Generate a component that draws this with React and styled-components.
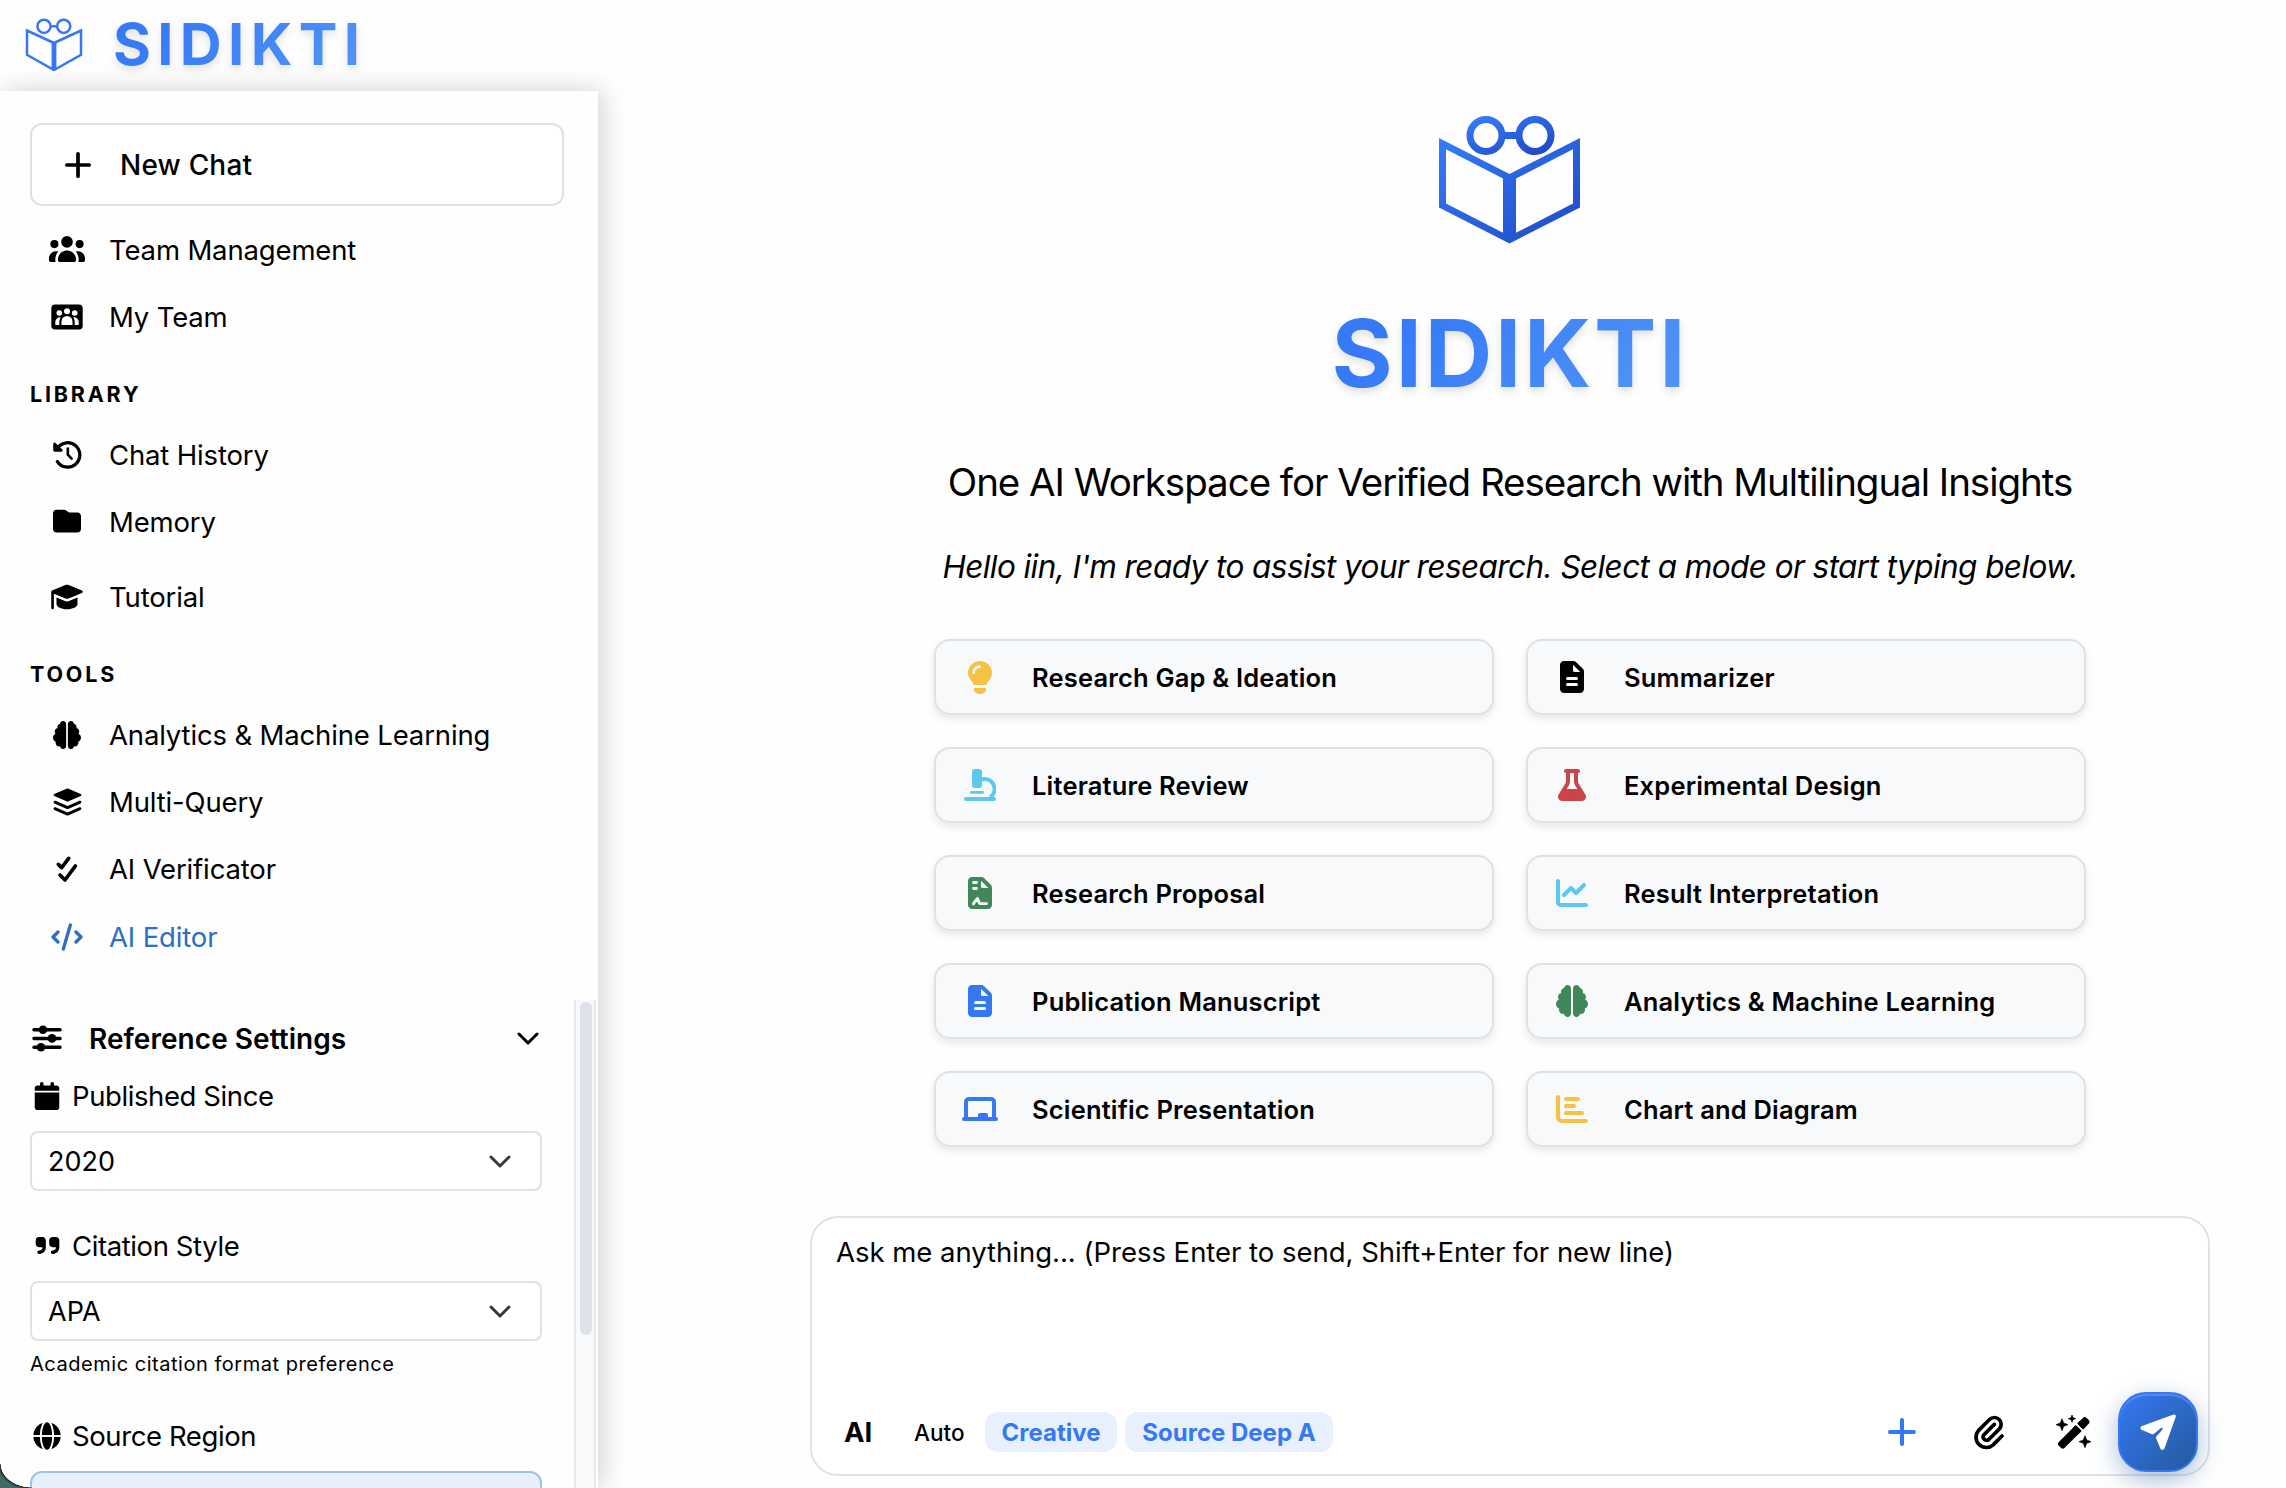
import React, { useState } from 'react';
import styled, { createGlobalStyle } from 'styled-components';
import { FaBrain, FaCalendar, FaQuoteRight, FaFlask, FaChartLine } from 'react-icons/fa6';

const GlobalStyle = createGlobalStyle`
  * { box-sizing: border-box; }
  body {
    margin: 0;
    background: #fefefe;
    color: #000;
    font-family: Inter, "Liberation Sans", sans-serif;
    overflow: hidden;
  }
  button { font: inherit; color: inherit; cursor: pointer; text-align: left; }
  svg { display: block; flex: none; }
`;

const Page = styled.div`
  position: relative;
  width: 2286px;
  height: 1488px;
  display: flex;
  flex-direction: column;
  overflow: hidden;
  background: #fefefe;
`;

const Header = styled.header`
  height: 91px;
  flex: none;
  display: flex;
  align-items: center;
  padding: 0 0 3px 25px;
`;

const Brand = styled.span`
  font-size: ${p => (p.$large ? '93.5px' : '58px')};
  line-height: 1;
  font-weight: 700;
  letter-spacing: ${p => (p.$large ? '2.8px' : '6.3px')};
  background: linear-gradient(135deg, #367af7 20%, #5296f8 100%);
  -webkit-background-clip: text;
  background-clip: text;
  color: transparent;
  filter: drop-shadow(0 4px 4px rgba(0, 0, 0, 0.12));
`;

const HeaderBrand = styled(Brand)`
  margin-left: 30px;
`;

const Body = styled.div`
  flex: 1;
  min-height: 0;
  display: flex;
`;

const Sidebar = styled.aside`
  width: 598px;
  flex: none;
  display: flex;
  flex-direction: column;
  padding-top: 32px;
  background: #fefefe;
  box-shadow: 4px 0 24px rgba(0, 0, 0, 0.18);
`;

const NewChat = styled.button`
  height: 83px;
  margin: 0 34px 10px 30px;
  padding: 0 0 0 33px;
  display: flex;
  align-items: center;
  gap: 29px;
  flex: none;
  background: #fff;
  border: 2px solid #dee2e6;
  border-radius: 12px;
  font-size: 28px;
  font-weight: 500;
  letter-spacing: 0.2px;
`;

const NavHeading = styled.h3`
  height: 71px;
  flex: none;
  margin: 0;
  padding: 17px 0 0 30px;
  line-height: 54px;
  font-size: 21.5px;
  font-weight: 700;
  letter-spacing: 2.8px;
`;

const NavItem = styled.a`
  height: 67px;
  flex: none;
  display: flex;
  align-items: center;
  margin-top: ${p => p.$space || 0}px;
  padding-left: 47px;
  font-size: 27.5px;
  letter-spacing: -0.15px;
  color: ${p => (p.$active ? '#2b70c1' : '#000')};
`;

const NavIcon = styled.span`
  width: 40px;
  margin-right: 22px;
  display: flex;
  justify-content: center;
`;

const Settings = styled.section`
  flex: 1;
  min-height: 0;
  margin-top: 30px;
  display: flex;
  overflow: hidden;
`;

const SettingsBody = styled.div`
  width: 512px;
  margin-left: 30px;
`;

const SettingsTitle = styled.div`
  height: 77px;
  display: flex;
  align-items: center;
  padding: 0 3px 0 2px;
  font-size: 28px;
  font-weight: 600;
  letter-spacing: 0.05px;
  span { flex: 1; margin-left: 27px; }
`;

const FieldLabel = styled.label`
  padding-top: ${p => p.$top || 0}px;
  height: ${p => 37 + (p.$top || 0)}px;
  display: flex;
  align-items: center;
  font-size: 27.5px;
  letter-spacing: -0.4px;
`;

const LabelIcon = styled.span`
  width: 34px;
  margin-right: 8px;
  display: flex;
  justify-content: center;
`;

const SelectBox = styled.button`
  width: 100%;
  height: 60px;
  margin: 17px 0 0;
  padding: 0 29px 0 16px;
  display: flex;
  align-items: center;
  justify-content: space-between;
  background: ${p => (p.$region ? '#e7effa' : '#fff')};
  border: 2px solid ${p => (p.$region ? '#9dc3e6' : '#dee2e6')};
  border-radius: ${p => (p.$region ? '12px' : '8px')};
  font-size: 27px;
`;

const Hint = styled.p`
  margin: 0;
  height: 47px;
  line-height: 47px;
  font-size: 20px;
  letter-spacing: 0.53px;
`;

const ScrollTrack = styled.div`
  width: 22px;
  margin-left: 32px;
  padding: 2px 4px;
  background: #f8f9fb;
  border: solid #e6e8ea;
  border-width: 0 2px;
`;

const ScrollThumb = styled.div`
  width: 12px;
  height: 333px;
  border-radius: 6px;
  background: #dee1e7;
`;

const Main = styled.main`
  flex: 1;
  display: flex;
  flex-direction: column;
  align-items: center;
  padding-left: 136px;
`;

const HeroLogo = styled.div`
  margin-top: 23px;
  height: 136px;
`;

const HeroBrand = styled(Brand)`
  margin-top: 56.5px;
`;

const Tagline = styled.h2`
  margin: 57px 0 0;
  font-size: 38.5px;
  line-height: 50px;
  font-weight: 400;
  letter-spacing: -1.03px;
  white-space: nowrap;
`;

const Greeting = styled.p`
  margin: 38px 0 0;
  font-size: 31.5px;
  line-height: 44px;
  font-style: italic;
  letter-spacing: -0.57px;
  white-space: nowrap;
`;

const Modes = styled.div`
  width: 1152px;
  margin-top: 50px;
  display: grid;
  grid-template-columns: 1fr 1fr;
  gap: 32px;
`;

const ModeCard = styled.button`
  height: 76px;
  display: flex;
  align-items: center;
  padding: 0;
  background: #f8f9fb;
  border: 2px solid #dee2e6;
  border-radius: 16px;
  box-shadow: 0 4px 8px rgba(0, 0, 0, 0.09);
  font-size: 25.5px;
  font-weight: 600;
  letter-spacing: 0.18px;
`;

const ModeIcon = styled.span`
  width: 88px;
  margin-right: 8px;
  display: flex;
  justify-content: center;
  color: ${p => p.$color};
`;

const Composer = styled.div`
  width: 1400px;
  height: 260px;
  margin-top: 69px;
  display: flex;
  flex-direction: column;
  justify-content: space-between;
  background: #fff;
  border: 2px solid #dee2e6;
  border-radius: 28px;
`;

const Prompt = styled.div`
  padding: 18px 0 0 24px;
  font-size: 27.5px;
  line-height: 32px;
  letter-spacing: -0.02px;
`;

const Toolbar = styled.div`
  height: 80px;
  margin-bottom: 2px;
  padding: 0 10px 0 32px;
  display: flex;
  align-items: center;
`;

const ModelName = styled.span`
  width: 70px;
  font-size: 27.5px;
  font-weight: 700;
`;

const AutoLabel = styled.span`
  width: 71px;
  font-size: 22.5px;
  font-weight: 500;
`;

const Chip = styled.button`
  width: ${p => p.$width}px;
  height: 40px;
  margin-right: 8px;
  padding: 0;
  border: 0;
  border-radius: 13px;
  background: #e8effd;
  color: #3478f6;
  text-align: center;
  font-size: 24px;
  font-weight: 700;
  white-space: nowrap;
`;

const ToolIcons = styled.div`
  margin-left: auto;
  margin-right: 27px;
  display: flex;
  align-items: center;
  gap: 52px;
  svg:first-child { margin-right: 6px; }
`;

const SendButton = styled.button`
  width: 80px;
  height: 80px;
  padding: 0;
  display: flex;
  align-items: center;
  justify-content: center;
  border: 2px solid #3478f6;
  border-radius: 28px;
  color: #fff;
  background: linear-gradient(135deg, #3478f6, #255a9b);
  box-shadow: 0 8px 24px rgba(37, 90, 155, 0.4), inset 0 2px 0 rgba(255, 255, 255, 0.18);
`;

const Corner = styled.div`
  position: absolute;
  left: 0;
  bottom: 0;
  width: 32px;
  height: 24px;
  background: radial-gradient(ellipse 32px 24px at 100% 0, transparent 97%, #172b29 99%, #446a66 108%);
`;

/* icons */

const SmallLogo = () => (
  <svg width="58" height="54" viewBox="0 0 58 54" fill="none" stroke="#3478f6" strokeWidth="2.5">
    <path d="M2 13.5v24.3l27 15.2 27-15.2V13.5L29 26z" />
    <path d="M29 26v26" strokeWidth="4.8" />
    <circle cx="19" cy="9.3" r="6.6" />
    <circle cx="38.7" cy="9.3" r="6.6" />
    <path d="M25.6 9.3h6.5" />
  </svg>
);

const BigLogo = () => (
  <svg width="142" height="130" viewBox="0 0 142 130" fill="none" strokeWidth="7">
    <defs>
      <linearGradient id="brandBlue" x1="0" y1="0" x2="1" y2="1">
        <stop offset="0" stopColor="#367cf8" />
        <stop offset="1" stopColor="#1d48c6" />
      </linearGradient>
    </defs>
    <path
      stroke="url(#brandBlue)"
      d="M31 21.5a16 16 0 1 0 32 0a16 16 0 1 0 -32 0M63 21.5h17M80 21.5a16 16 0 1 0 32 0a16 16 0 1 0 -32 0"
    />
    <path
      fill="url(#brandBlue)"
      fillRule="evenodd"
      d="M0 24L70.500 60l70.500-36v69.500L70.500 129.500 0 93.500zM7 35.300V89.500L64 118.800V64.500zM134 35.300V89.500L77 118.800V64.500z"
    />
  </svg>
);

const Plus = ({ size, color }) => (
  <svg width={size} height={size} viewBox="0 0 28 28" stroke={color || 'currentColor'} strokeWidth="4" strokeLinecap="round">
    <path d="M14 2v24M2 14h24" />
  </svg>
);

const Users = () => (
  <svg width="36" height="29" viewBox="0 0 640 512" fill="currentColor">
    <path d="M320 16a104 104 0 1 1 0 208 104 104 0 1 1 0-208zM96 88a72 72 0 1 1 0 144 72 72 0 1 1 0-144zM0 416c0-70.7 57.3-128 128-128 12.800 0 25.200 1.900 36.900 5.400-32.900 36.800-52.900 85.400-52.900 138.600l0 16c0 11.400 2.400 22.200 6.700 32L32 480c-17.700 0-32-14.300-32-32l0-32zm521.300 64c4.300-9.800 6.700-20.600 6.700-32l0-16c0-53.200-20-101.800-52.900-138.600 11.700-3.500 24.100-5.400 36.900-5.400 70.700 0 128 57.300 128 128l0 32c0 17.700-14.300 32-32 32l-86.700 0zM472 160a72 72 0 1 1 144 0 72 72 0 1 1-144 0zM160 432c0-88.400 71.600-160 160-160s160 71.600 160 160l0 16c0 17.700-14.300 32-32 32l-256 0c-17.700 0-32-14.300-32-32l0-16z" />
  </svg>
);

const TeamBadge = () => (
  <svg width="32" height="26" viewBox="0 0 32 26">
    <rect x="0.300" y="0.500" width="31.400" height="25" rx="3.800" fill="currentColor" />
    <g fill="#fff">
      <circle cx="16" cy="7.300" r="3" />
      <circle cx="8.300" cy="9" r="2.800" />
      <circle cx="23.700" cy="9" r="2.800" />
      <path d="M10.500 21v-3.500a5.500 5.500 0 0 1 11 0V21z" />
      <path d="M4.300 21v-3a4.600 4.600 0 0 1 5.400-4.600A8 8 0 0 0 8.300 18v3zM27.700 21v-3a4.600 4.600 0 0 0-5.400-4.600A8 8 0 0 1 23.700 18v3z" />
    </g>
  </svg>
);

const History = () => (
  <svg width="29" height="29" viewBox="0 0 512 512" fill="none" stroke="currentColor" strokeWidth="58" strokeLinecap="round" strokeLinejoin="round">
    <path d="M82 140a215 215 0 1 1-4 240" />
    <path d="M28 70v112h118z" fill="currentColor" strokeWidth="48" />
    <path d="M262 150v108l66 70" strokeWidth="46" />
  </svg>
);

const Folder = () => (
  <svg width="28" height="28" viewBox="0 0 512 512" fill="currentColor">
    <path d="M64 448l384 0c35.300 0 64-28.700 64-64l0-240c0-35.300-28.700-64-64-64L298.700 80c-6.900 0-13.700-2.200-19.200-6.400L241.100 44.800C230 36.500 216.500 32 202.700 32L64 32C28.700 32 0 60.700 0 96L0 384c0 35.300 28.700 64 64 64z" />
  </svg>
);

const GradCap = () => (
  <svg width="32" height="28" viewBox="0 0 576 512" fill="currentColor">
    <path d="M48 195.800l209.200 86.100c9.800 4 20.200 6.100 30.800 6.100s21-2.100 30.800-6.100l242.400-99.800c9-3.700 14.800-12.400 14.800-22.100s-5.800-18.400-14.800-22.100L318.800 38.100C309 34.100 298.600 32 288 32s-21 2.100-30.800 6.100L14.800 137.900C5.800 141.600 0 150.300 0 160L0 456c0 13.300 10.700 24 24 24s24-10.700 24-24l0-260.200zm48 71.700L96 384c0 53 86 96 192 96s192-43 192-96l0-116.600-142.900 58.900c-15.600 6.400-32.200 9.700-49.100 9.700s-33.500-3.300-49.100-9.700L96 267.400z" />
  </svg>
);

const Layers = () => (
  <svg width="29" height="28" viewBox="0 0 86 84" fill="none" stroke="currentColor" strokeWidth="8.500" strokeLinecap="round" strokeLinejoin="round">
    <path d="M4.500 21L43 4.500 81.500 21 43 38z" fill="currentColor" strokeWidth="6" />
    <path d="M5.500 42.500L43 59l37.500-16.500M5.500 62L43 78.500 80.500 62" />
  </svg>
);

const DoubleCheck = () => (
  <svg width="30" height="28" viewBox="0 0 90 84" fill="none" stroke="currentColor" strokeWidth="11" strokeLinecap="round" strokeLinejoin="round">
    <path d="M19 28l10 10 21-28M24 60l15 15 31-42" />
  </svg>
);

const Code = () => (
  <svg width="32" height="28" viewBox="0 0 96 84" fill="none" stroke="currentColor" strokeWidth="10" strokeLinecap="round" strokeLinejoin="round">
    <path d="M21 27L6 42l15 15M75 27l15 15-15 15M58 6L37 78" />
  </svg>
);

const Sliders = () => (
  <svg width="30" height="27" viewBox="0 0 30 27" fill="currentColor" stroke="currentColor" strokeWidth="3.500" strokeLinecap="round">
    <path d="M2 4.700h26M2 13.400h26M2 22.200h26" />
    <g stroke="none">
      <circle cx="11" cy="4.700" r="4.300" />
      <circle cx="20" cy="13.400" r="4.300" />
      <circle cx="9" cy="22.200" r="4.300" />
    </g>
  </svg>
);

const Chevron = ({ color }) => (
  <svg width="22" height="13" viewBox="0 0 22 13" fill="none" stroke={color} strokeWidth="3" strokeLinecap="round" strokeLinejoin="round">
    <path d="M2 2l9 9 9-9" />
  </svg>
);

const Globe = () => (
  <svg width="28" height="28" viewBox="0 0 28 28">
    <circle cx="14" cy="14" r="13.700" fill="currentColor" />
    <g fill="none" stroke="#fff" strokeWidth="1.900">
      <ellipse cx="14" cy="14" rx="6.200" ry="15" />
      <path d="M0 14h28" />
    </g>
  </svg>
);

const Bulb = () => (
  <svg width="24" height="33" viewBox="0 0 72 99" fill="currentColor">
    <path d="M36 0a36 36 0 0 1 36 36c0 12-6 18-11 25-3 4-4 7-6 11H17c-2-4-3-7-6-11C6 54 0 48 0 36A36 36 0 0 1 36 0zM18 81h36v3a15 15 0 0 1-15 15h-6a15 15 0 0 1-15-15z" />
    <path d="M17 35a18 18 0 0 1 18-18" fill="none" stroke="#f8f9fb" strokeWidth="8" strokeLinecap="round" />
  </svg>
);

const Microscope = () => (
  <svg width="32" height="32" viewBox="0 0 96 96" fill="none" stroke="currentColor" strokeWidth="12" strokeLinecap="round">
    <rect x="24" y="0" width="30" height="57" rx="9" fill="currentColor" stroke="none" />
    <path d="M6 90h84" />
    <path d="M22 70h34" strokeWidth="8" />
    <path d="M54 30h6a30 30 0 0 1 18 55" strokeLinecap="butt" />
  </svg>
);

const FILE_SHAPE =
  'M0 64C0 28.700 28.700 0 64 0L213.500 0c17 0 33.300 6.700 45.300 18.700L365.300 125.300c12 12 18.700 28.300 18.700 45.300L384 448c0 35.300-28.700 64-64 64L64 512c-35.300 0-64-28.700-64-64L0 64zm208-5.500l0 93.500c0 13.300 10.700 24 24 24L325.500 176 208 58.500z';

const FileLines = () => (
  <svg width="24" height="32" viewBox="0 0 384 512" fill="currentColor">
    <path fillRule="evenodd" d={FILE_SHAPE} />
    <path d="M120 280h144M120 376h144" stroke="#f8f9fb" strokeWidth="48" strokeLinecap="round" />
  </svg>
);

const FileContract = () => (
  <svg width="24" height="32" viewBox="0 0 384 512" fill="currentColor">
    <path fillRule="evenodd" d={FILE_SHAPE} />
    <path
      d="M88 88h48M88 184h48M85 430l60-82q6-8 12 2l24 68q3 8 12 8h103"
      fill="none"
      stroke="#f8f9fb"
      strokeWidth="46"
      strokeLinecap="round"
      strokeLinejoin="round"
    />
  </svg>
);

const Chalkboard = () => (
  <svg width="36" height="24" viewBox="0 0 108 72" fill="none" stroke="currentColor" strokeWidth="12" strokeLinecap="round">
    <path d="M12 64V15a9 9 0 0 1 9-9h66a9 9 0 0 1 9 9v49M6 66h96" />
    <rect x="48" y="48" width="30" height="20" rx="6" fill="currentColor" stroke="none" />
  </svg>
);

const BarChart = () => (
  <svg width="32" height="28" viewBox="0 0 96 84" fill="none" stroke="currentColor" strokeWidth="12" strokeLinecap="round">
    <path d="M6 6v60a12 12 0 0 0 12 12h72M30 12h36M30 33h24M30 54h48" />
  </svg>
);

const Paperclip = () => (
  <svg width="30" height="35" viewBox="0 0 90 105" fill="none" stroke="currentColor" strokeWidth="11" strokeLinecap="round">
    <path d="M61 28L30 59A10.300 10.300 0 0 0 44.500 73.500L75.500 42.500A20.500 20.500 0 0 0 46.500 13.500L14 46A30.800 30.800 0 0 0 57.500 89.500L84 63" />
  </svg>
);

const Wand = () => (
  <svg width="35" height="35" viewBox="0 0 105 105" fill="currentColor">
    <g transform="rotate(-45 54 53)">
      <rect x="-6" y="40.500" width="80" height="25" rx="8" />
      <rect x="60" y="40.500" width="14" height="25" />
      <rect x="80" y="40.500" width="32" height="25" rx="9" />
      <rect x="80" y="40.500" width="12" height="25" />
    </g>
    <path d="M18 11l5 13 13 5-13 5-5 13-5-13-13-5 13-5zM48 0l3 8 8 3-8 3-3 8-3-8-8-3 8-3zM87 62l5 13 13 5-13 5-5 13-5-13-13-5 13-5z" strokeLinejoin="round" stroke="currentColor" strokeWidth="2" />
  </svg>
);

const PaperPlane = () => (
  <svg width="36" height="36" viewBox="8 -36 566 566" fill="currentColor">
    <path d="M536.400-26.300c9.800-3.500 20.600-1 28 6.300s9.800 18.200 6.300 28l-178 496.900c-5 13.900-18.100 23.100-32.800 23.100-14.200 0-27-8.600-32.300-21.700l-64.200-158c-4.500-11-2.500-23.600 5.200-32.600l94.500-112.400c5.100-6.100 4.700-15-.9-20.600s-14.600-6-20.600-.9L229.200 276.100c-9.100 7.600-21.600 9.600-32.600 5.200L38.100 216.800c-13.100-5.300-21.700-18.100-21.700-32.300 0-14.700 9.200-27.800 23.100-32.800l496.900-178z" />
  </svg>
);

const teamLinks = [
  { label: 'Team Management', icon: <Users /> },
  { label: 'My Team', icon: <TeamBadge /> },
];

const libraryLinks = [
  { label: 'Chat History', icon: <History /> },
  { label: 'Memory', icon: <Folder /> },
  { label: 'Tutorial', icon: <GradCap />, space: 8 },
];

const toolLinks = [
  { label: 'Analytics & Machine Learning', icon: <FaBrain size={28} /> },
  { label: 'Multi-Query', icon: <Layers /> },
  { label: 'AI Verificator', icon: <DoubleCheck /> },
  { label: 'AI Editor', icon: <Code />, space: 1, active: true },
];

const modes = [
  { label: 'Research Gap & Ideation', icon: <Bulb />, color: '#f5c244' },
  { label: 'Summarizer', icon: <FileLines />, color: '#000' },
  { label: 'Literature Review', icon: <Microscope />, color: '#5bc8ee' },
  { label: 'Experimental Design', icon: <FaFlask size={32} />, color: '#cb444a' },
  { label: 'Research Proposal', icon: <FileContract />, color: '#40875a' },
  { label: 'Result Interpretation', icon: <FaChartLine size={32} />, color: '#5bc8ee' },
  { label: 'Publication Manuscript', icon: <FileLines />, color: '#3478f6' },
  { label: 'Analytics & Machine Learning', icon: <FaBrain size={32} />, color: '#40875a' },
  { label: 'Scientific Presentation', icon: <Chalkboard />, color: '#3478f6' },
  { label: 'Chart and Diagram', icon: <BarChart />, color: '#f5c244' },
];

function NavList({ links }) {
  return links.map(link => (
    <NavItem key={link.label} $space={link.space} $active={link.active}>
      <NavIcon>{link.icon}</NavIcon>
      {link.label}
    </NavItem>
  ));
}

export default function App() {
  const [year] = useState('2020');
  const [citation] = useState('APA');

  return (
    <Page>
      <GlobalStyle />
      <Header>
        <SmallLogo />
        <HeaderBrand>SIDIKTI</HeaderBrand>
      </Header>
      <Body>
        <Sidebar>
          <NewChat>
            <Plus size={26} />
            New Chat
          </NewChat>
          <NavList links={teamLinks} />
          <NavHeading>LIBRARY</NavHeading>
          <NavList links={libraryLinks} />
          <NavHeading>TOOLS</NavHeading>
          <NavList links={toolLinks} />
          <Settings>
            <SettingsBody>
              <SettingsTitle>
                <Sliders />
                <span>Reference Settings</span>
                <Chevron color="#000" />
              </SettingsTitle>
              <FieldLabel>
                <LabelIcon><FaCalendar size={28} /></LabelIcon>
                Published Since
              </FieldLabel>
              <SelectBox>
                {year}
                <Chevron color="#343a40" />
              </SelectBox>
              <FieldLabel $top={36}>
                <LabelIcon><FaQuoteRight size={27} /></LabelIcon>
                Citation Style
              </FieldLabel>
              <SelectBox>
                {citation}
                <Chevron color="#343a40" />
              </SelectBox>
              <Hint>Academic citation format preference</Hint>
              <FieldLabel $top={29}>
                <LabelIcon><Globe /></LabelIcon>
                Source Region
              </FieldLabel>
              <SelectBox $region />
            </SettingsBody>
            <ScrollTrack>
              <ScrollThumb />
            </ScrollTrack>
          </Settings>
        </Sidebar>
        <Main>
          <HeroLogo><BigLogo /></HeroLogo>
          <HeroBrand $large>SIDIKTI</HeroBrand>
          <Tagline>One AI Workspace for Verified Research with Multilingual Insights</Tagline>
          <Greeting>Hello iin, I'm ready to assist your research. Select a mode or start typing below.</Greeting>
          <Modes>
            {modes.map(mode => (
              <ModeCard key={mode.label}>
                <ModeIcon $color={mode.color}>{mode.icon}</ModeIcon>
                {mode.label}
              </ModeCard>
            ))}
          </Modes>
          <Composer>
            <Prompt>Ask me anything... (Press Enter to send, Shift+Enter for new line)</Prompt>
            <Toolbar>
              <ModelName>AI</ModelName>
              <AutoLabel>Auto</AutoLabel>
              <Chip $width={132}>Creative</Chip>
              <Chip $width={208}>Source Deep A</Chip>
              <ToolIcons>
                <Plus size={28} color="#3478f6" />
                <Paperclip />
                <Wand />
              </ToolIcons>
              <SendButton><PaperPlane /></SendButton>
            </Toolbar>
          </Composer>
        </Main>
      </Body>
      <Corner />
    </Page>
  );
}
